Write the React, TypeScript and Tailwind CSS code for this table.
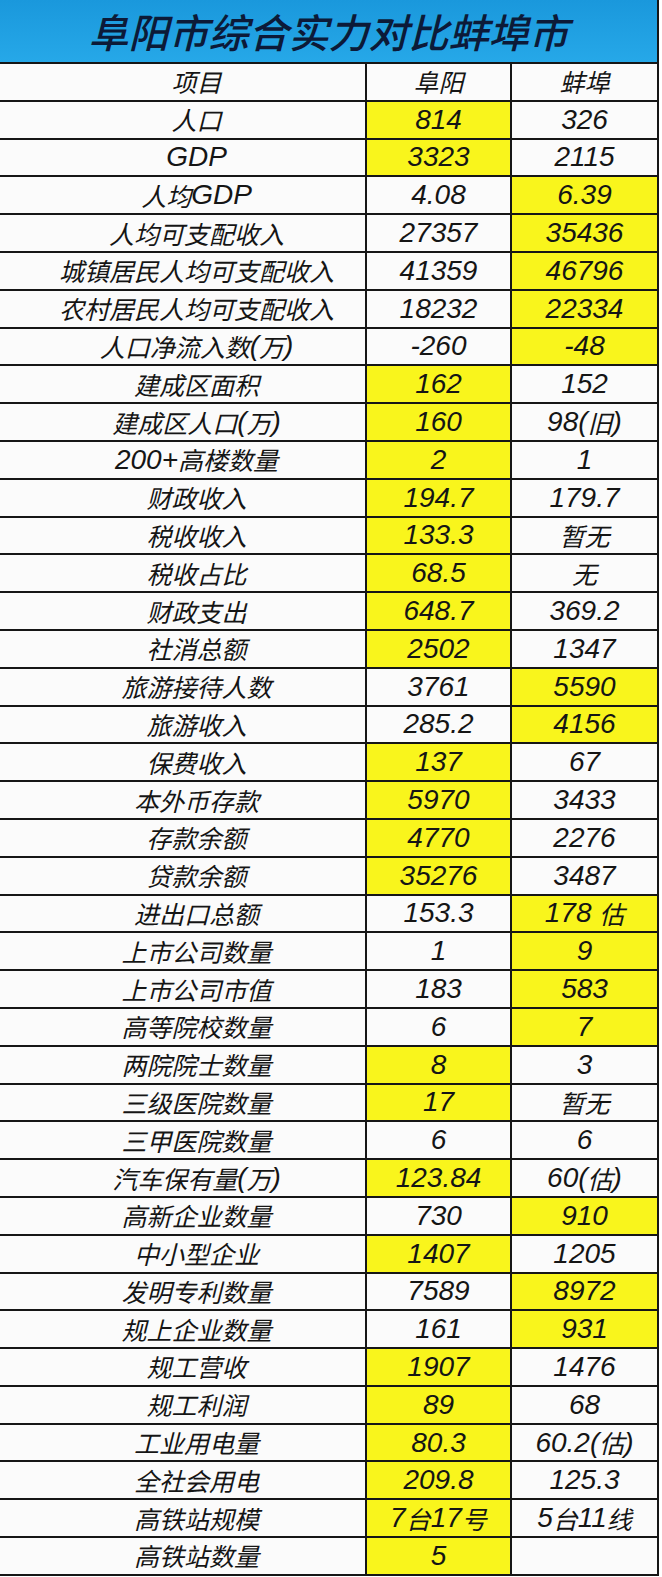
import React from 'react';

type Row = {
  label: string;
  fy: string;
  bb: string;
  hl?: 'fy' | 'bb';
};

const rows: Row[] = [
  { label: '人口', fy: '814', bb: '326', hl: 'fy' },
  { label: 'GDP', fy: '3323', bb: '2115', hl: 'fy' },
  { label: '人均GDP', fy: '4.08', bb: '6.39', hl: 'bb' },
  { label: '人均可支配收入', fy: '27357', bb: '35436', hl: 'bb' },
  { label: '城镇居民人均可支配收入', fy: '41359', bb: '46796', hl: 'bb' },
  { label: '农村居民人均可支配收入', fy: '18232', bb: '22334', hl: 'bb' },
  { label: '人口净流入数(万)', fy: '-260', bb: '-48', hl: 'bb' },
  { label: '建成区面积', fy: '162', bb: '152', hl: 'fy' },
  { label: '建成区人口(万)', fy: '160', bb: '98(旧)', hl: 'fy' },
  { label: '200+高楼数量', fy: '2', bb: '1', hl: 'fy' },
  { label: '财政收入', fy: '194.7', bb: '179.7', hl: 'fy' },
  { label: '税收收入', fy: '133.3', bb: '暂无', hl: 'fy' },
  { label: '税收占比', fy: '68.5', bb: '无', hl: 'fy' },
  { label: '财政支出', fy: '648.7', bb: '369.2', hl: 'fy' },
  { label: '社消总额', fy: '2502', bb: '1347', hl: 'fy' },
  { label: '旅游接待人数', fy: '3761', bb: '5590', hl: 'bb' },
  { label: '旅游收入', fy: '285.2', bb: '4156', hl: 'bb' },
  { label: '保费收入', fy: '137', bb: '67', hl: 'fy' },
  { label: '本外币存款', fy: '5970', bb: '3433', hl: 'fy' },
  { label: '存款余额', fy: '4770', bb: '2276', hl: 'fy' },
  { label: '贷款余额', fy: '35276', bb: '3487', hl: 'fy' },
  { label: '进出口总额', fy: '153.3', bb: '178\u00a0估', hl: 'bb' },
  { label: '上市公司数量', fy: '1', bb: '9', hl: 'bb' },
  { label: '上市公司市值', fy: '183', bb: '583', hl: 'bb' },
  { label: '高等院校数量', fy: '6', bb: '7', hl: 'bb' },
  { label: '两院院士数量', fy: '8', bb: '3', hl: 'fy' },
  { label: '三级医院数量', fy: '17', bb: '暂无', hl: 'fy' },
  { label: '三甲医院数量', fy: '6', bb: '6' },
  { label: '汽车保有量(万)', fy: '123.84', bb: '60(估)', hl: 'fy' },
  { label: '高新企业数量', fy: '730', bb: '910', hl: 'bb' },
  { label: '中小型企业', fy: '1407', bb: '1205', hl: 'fy' },
  { label: '发明专利数量', fy: '7589', bb: '8972', hl: 'bb' },
  { label: '规上企业数量', fy: '161', bb: '931', hl: 'bb' },
  { label: '规工营收', fy: '1907', bb: '1476', hl: 'fy' },
  { label: '规工利润', fy: '89', bb: '68', hl: 'fy' },
  { label: '工业用电量', fy: '80.3', bb: '60.2(估)', hl: 'fy' },
  { label: '全社会用电', fy: '209.8', bb: '125.3', hl: 'fy' },
  { label: '高铁站规模', fy: '7台17号', bb: '5台11线', hl: 'fy' },
  { label: '高铁站数量', fy: '5', bb: '', hl: 'fy' },
];

// CJK runs get a smaller size than digits/latin, like the source table
function Mixed({ text }: { text: string }) {
  const parts = text.split(/([\u4e00-\u9fff]+)/).filter((p) => p !== '');
  return (
    <>
      {parts.map((p, i) =>
        /[\u4e00-\u9fff]/.test(p) ? (
          <span key={i} className="text-[25px]">{p}</span>
        ) : (
          <span key={i} className="text-[28px] font-['Liberation_Sans',sans-serif]">{p}</span>
        )
      )}
    </>
  );
}

const cellBase =
  'flex items-center justify-center border-b-2 border-[#161616] italic text-[#151515] leading-none whitespace-nowrap';

export default function App() {
  return (
    <div className="w-[662px] bg-white font-['Noto_Sans_CJK_SC',sans-serif]">
      <div className="w-[659px] border-r-2 border-[#161616]">
        {/* Title */}
        <div className="h-[64px] flex items-center justify-center bg-gradient-to-b from-[#1a98dc] to-[#26a8e8] border-b-2 border-[#161616]">
          <h1 className="text-[40px] italic font-medium text-[#0c1a38] leading-none">
            阜阳市综合实力对比蚌埠市
          </h1>
        </div>

        {/* Header */}
        <div className="grid grid-cols-[367px_145px_145px] h-[37.8px]">
          <div className={`${cellBase} bg-[#fbfbfb] border-r-2 pl-[28px]`}>
            <Mixed text="项目" />
          </div>
          <div className={`${cellBase} bg-[#fbfbfb] border-r-2`}>
            <Mixed text="阜阳" />
          </div>
          <div className={`${cellBase} bg-[#fbfbfb]`}>
            <Mixed text="蚌埠" />
          </div>
        </div>

        {rows.map((r) => (
          <div key={r.label} className="grid grid-cols-[367px_145px_145px] h-[37.8px]">
            <div className={`${cellBase} bg-[#fbfbfb] border-r-2 pl-[28px]`}>
              <Mixed text={r.label} />
            </div>
            <div className={`${cellBase} border-r-2 ${r.hl === 'fy' ? 'bg-[#f9f51c]' : 'bg-[#fbfbfb]'}`}>
              <Mixed text={r.fy} />
            </div>
            <div className={`${cellBase} ${r.hl === 'bb' ? 'bg-[#f9f51c]' : 'bg-[#fbfbfb]'}`}>
              <Mixed text={r.bb} />
            </div>
          </div>
        ))}
      </div>
    </div>
  );
}
